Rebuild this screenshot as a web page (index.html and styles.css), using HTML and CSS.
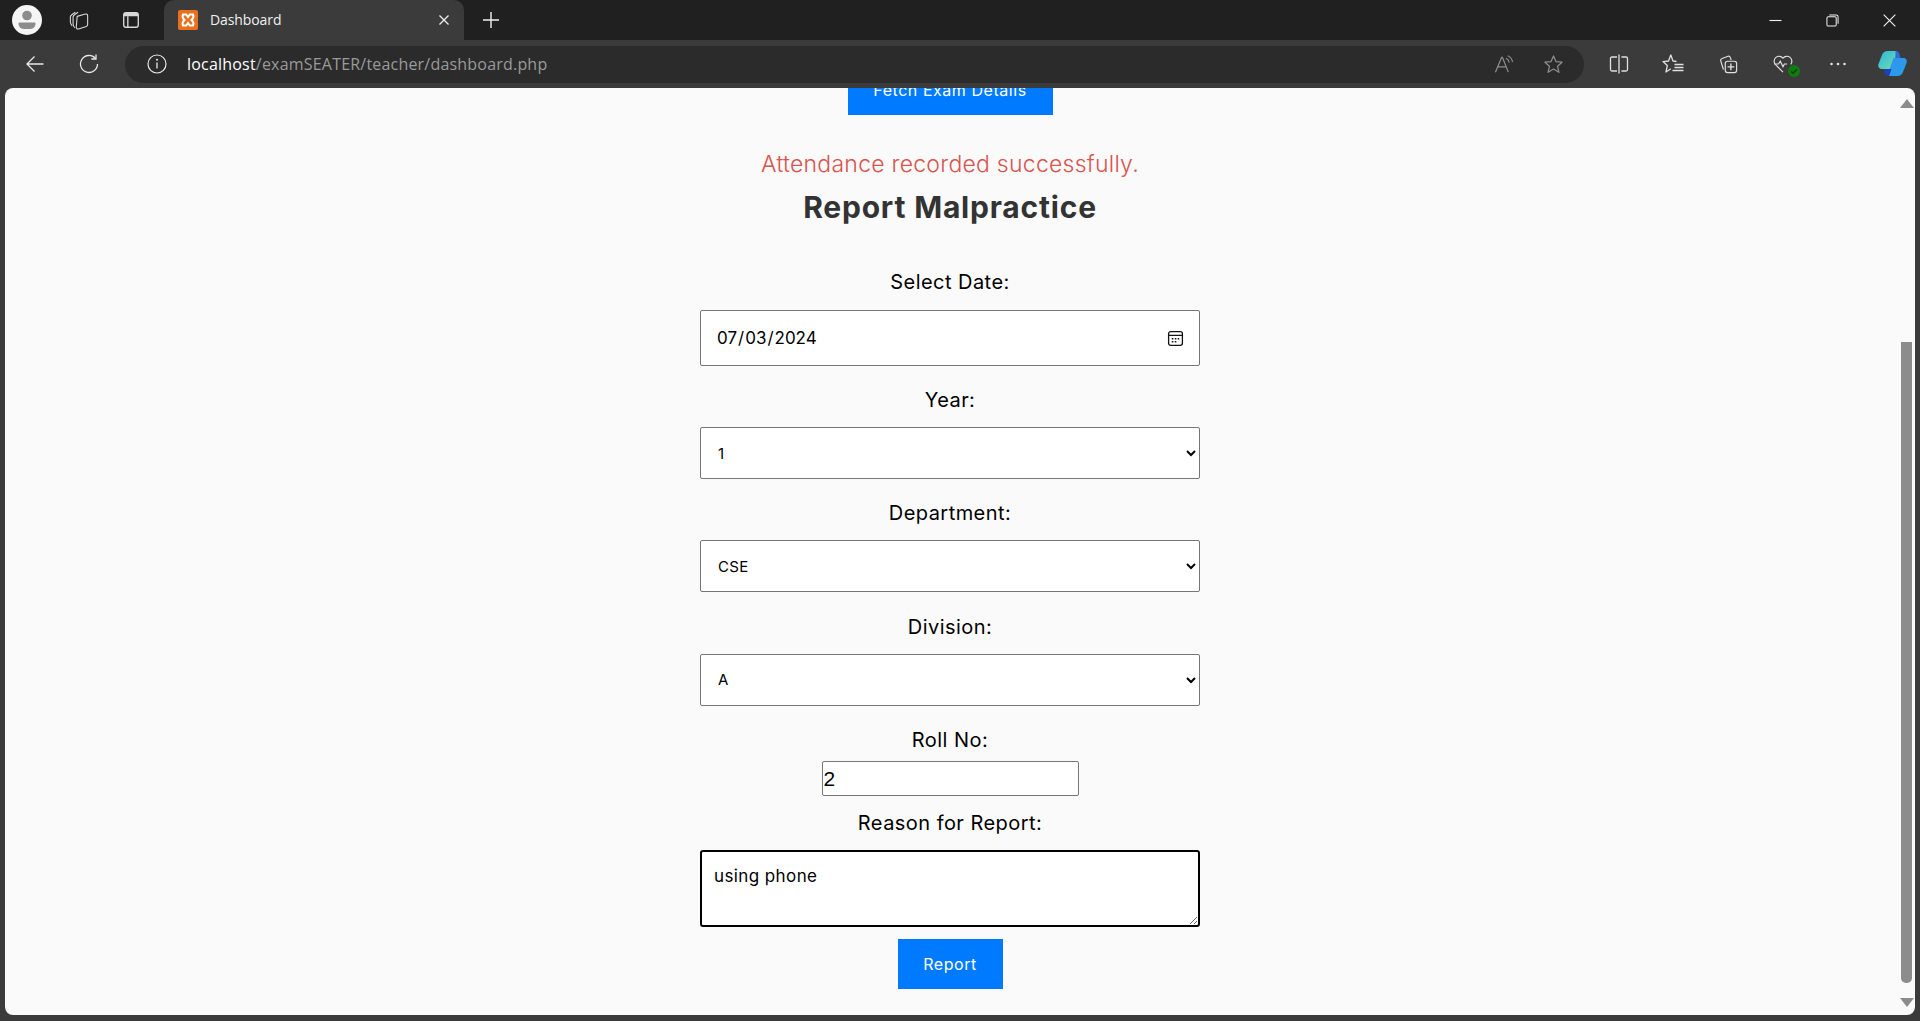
FILE: index.html
```html
<!DOCTYPE html>
<html lang="en">
<head>
  <meta charset="UTF-8" />
  <meta name="viewport" content="width=device-width, initial-scale=1.0"/>
  <title>Dashboard</title>
  <link rel="stylesheet" href="styles.css">
</head>
<body>
  <div class="tabbar">
    <div class="slot">
      <svg class="avatar" viewBox="0 0 30 30"><circle cx="15" cy="15" r="15" fill="#f5f5f5"/><circle cx="15" cy="10.5" r="4.800" fill="#8c8c8c"/><path d="M7.500 17.500h15a1 1 0 0 1 1 1v1a6 6 0 0 1-6 4.500h-5a6 6 0 0 1-6-4.500v-1a1 1 0 0 1 1-1z" fill="#8c8c8c"/></svg>
    </div>
    <div class="slot">
      <svg class="ico" viewBox="0 0 22 22"><g fill="none" stroke="#d8d8d8" stroke-width="1.200" stroke-linejoin="round"><path d="M3.500 17.500C2 16 1.500 14.500 1.500 13V7.500c0-1 .5-1.500 1.500-2.300L7 2.500"/><path d="M6.500 19.500C5 18.500 4.500 17 4.500 15V7.500c0-1 .5-1.500 1.500-2.300L10 2.500"/><path d="M9 7.500l9-2.500c1.500-.4 2.500.4 2.500 1.800v9.700c0 1-.6 1.800-1.500 2.100l-8.500 2.700c-1.500.4-2.500-.4-2.500-1.800z" transform="translate(0 -.5)"/></g></svg>
    </div>
    <div class="slot">
      <svg class="ico" viewBox="0 0 22 22"><rect x="3" y="3" width="16" height="16" rx="2.500" fill="none" stroke="#d8d8d8" stroke-width="1.500"/><path d="M3 5.500a2.500 2.500 0 0 1 2.500-2.500h11a2.500 2.500 0 0 1 2.500 2.500V7H3z" fill="#d8d8d8"/><path d="M7.500 7v12" stroke="#d8d8d8" stroke-width="1.500"/></svg>
    </div>
    <div class="tab">
      <svg class="favicon" viewBox="0 0 20 20"><rect width="20" height="20" rx="2" fill="#e8701f"/><path d="M5 4.500h3.200L10 7l1.800-2.500H15c1 2 .8 3.500-1.500 5.500 2.300 2 2.500 3.500 1.500 5.500h-3.200L10 13l-1.800 2.500H5c-1-2-.8-3.500 1.500-5.500C4.200 8 4 6.500 5 4.500z" fill="none" stroke="#fff" stroke-width="2"/></svg>
      <span class="tab-title">Dashboard</span>
      <svg class="tab-close" viewBox="0 0 12 12"><path d="M1.500 1.500l9 9M10.500 1.500l-9 9" stroke="#f0f0f0" stroke-width="1.300"/></svg>
    </div>
    <div class="slot newtab">
      <svg class="ico" viewBox="0 0 20 20"><path d="M10 2v16M2 10h16" stroke="#f0f0f0" stroke-width="1.400"/></svg>
    </div>
    <div class="winbtns">
      <div class="winbtn"><svg class="winico" viewBox="0 0 14 14"><path d="M.5 7h13" stroke="#f0f0f0" stroke-width="1.200"/></svg></div>
      <div class="winbtn"><svg class="winico" viewBox="0 0 14 14"><g fill="none" stroke="#f0f0f0" stroke-width="1.100"><rect x="1" y="3" width="10" height="10" rx="1.500"/><path d="M3.500 1h7.500a2 2 0 0 1 2 2v7.500"/></g></svg></div>
      <div class="winbtn"><svg class="winico" viewBox="0 0 14 14"><path d="M.7.700l12.600 12.600M13.300.700L.7 13.300" stroke="#f0f0f0" stroke-width="1.200"/></svg></div>
    </div>
  </div>

  <div class="toolbar">
    <div class="navbtn">
      <svg class="ico" viewBox="0 0 20 20"><path d="M18.500 10H2M9.500 2.500L2 10l7.500 7.500" fill="none" stroke="#e8e8e8" stroke-width="1.300"/></svg>
    </div>
    <div class="navbtn">
      <svg class="ico" viewBox="0 0 20 20"><path d="M16.500 4.500A8.500 8.500 0 1 0 18.500 10" fill="none" stroke="#e8e8e8" stroke-width="1.300"/><path d="M17 .5v4.500h-4.700" fill="none" stroke="#e8e8e8" stroke-width="1.300"/></svg>
    </div>
    <div class="address">
      <svg class="info" viewBox="0 0 20 20"><circle cx="10" cy="10" r="9" fill="none" stroke="#e8e8e8" stroke-width="1.200"/><path d="M10 8.500v6" stroke="#e8e8e8" stroke-width="1.300"/><circle cx="10" cy="5.800" r="1" fill="#e8e8e8"/></svg>
      <span class="url"><span class="url-host">localhost</span>/examSEATER/teacher/dashboard.php</span>
      <svg class="addr-ico read" viewBox="0 0 22 20"><path d="M1.500 18L8 2.500h.8L15 18M4 12.500h9" fill="none" stroke="#8e8e8e" stroke-width="1.300"/><path d="M12.500 3.500a6 6 0 0 1 3.500 4.500" fill="none" stroke="#8e8e8e" stroke-width="1.200"/><path d="M14.500 .8a9 9 0 0 1 5 6.500" fill="none" stroke="#8e8e8e" stroke-width="1.200"/></svg>
      <svg class="addr-ico" viewBox="0 0 22 22"><path d="M11 2l2.700 6 6.300.6-4.800 4.200 1.500 6.400L11 15.800 5.300 19.200l1.500-6.400L2 8.600 8.300 8z" fill="none" stroke="#8e8e8e" stroke-width="1.300" stroke-linejoin="round"/></svg>
    </div>
    <div class="tools">
      <div class="toolbtn"><svg class="ico" viewBox="0 0 20 20"><path d="M8 3H3a1.500 1.500 0 0 0-1.500 1.500v11A1.500 1.500 0 0 0 3 17h5M12.500 3H17a1.500 1.500 0 0 1 1.500 1.500v11A1.500 1.500 0 0 1 17 17h-4.500M10 .5v19" fill="none" stroke="#e0e0e0" stroke-width="1.300"/></svg></div>
      <div class="toolbtn"><svg class="ico fav-ico" viewBox="0 0 22 22"><path d="M14.500 8.500L11 8 8.800 2 6.500 8l-5.500.6 4.300 4-1.300 6.400 4.800-3.200" fill="none" stroke="#e0e0e0" stroke-width="1.300" stroke-linejoin="round"/><path d="M12.500 11.500h9M12.500 14.500h9M10.500 17.500h11" stroke="#e0e0e0" stroke-width="1.300"/></svg></div>
      <div class="toolbtn"><svg class="ico" viewBox="0 0 22 22"><path d="M6 17L3 7.500A2 2 0 0 1 4.500 5L11 2.500a2 2 0 0 1 2.500 1.200l1 3" fill="none" stroke="#e0e0e0" stroke-width="1.300"/><rect x="8" y="8" width="12.500" height="12.500" rx="2.500" fill="none" stroke="#e0e0e0" stroke-width="1.300"/><path d="M14.200 10.500v7.500M10.500 14.200h7.500" stroke="#e0e0e0" stroke-width="1.500"/></svg></div>
      <div class="toolbtn health">
        <svg class="ico" viewBox="0 0 22 22"><path d="M11 20L2.500 11.500A5.500 5.500 0 0 1 11 4.500a5.500 5.500 0 0 1 8.500 7" fill="none" stroke="#e0e0e0" stroke-width="1.300"/><path d="M1.500 11h4.500l2-3 3 6 1.500-3h3" fill="none" stroke="#e0e0e0" stroke-width="1.300"/></svg>
        <svg class="badge" viewBox="0 0 12 12"><circle cx="6" cy="6" r="6" fill="#107c10"/><path d="M3.200 6.200l2 2 3.600-4" fill="none" stroke="#0b3f0b" stroke-width="1.300"/></svg>
      </div>
      <div class="toolbtn"><svg class="ico" viewBox="0 0 20 20"><circle cx="3.500" cy="10" r="1.300" fill="#e0e0e0"/><circle cx="10" cy="10" r="1.300" fill="#e0e0e0"/><circle cx="16.500" cy="10" r="1.300" fill="#e0e0e0"/></svg></div>
      <div class="toolbtn">
        <svg class="copilot" viewBox="0 0 30 28">
          <defs>
            <linearGradient id="cpa" x1="0" y1="0" x2="1" y2="1"><stop offset="0" stop-color="#2fb4e8"/><stop offset="1" stop-color="#6fe0a0"/></linearGradient>
            <linearGradient id="cpb" x1="0" y1="0" x2="1" y2="1"><stop offset="0" stop-color="#3a8df0"/><stop offset="1" stop-color="#1fa4e8"/></linearGradient>
          </defs>
          <path d="M10 1h8c1.500 0 2 1 1.500 2.500L14 19H5c-3 0-5-2-4-5l3.500-9C5.500 2.500 7.500 1 10 1z" fill="url(#cpa)"/>
          <path d="M18 1c2 0 3.500 1 4 3l1 4h-5z" fill="#2a6fd8"/>
          <path d="M16 8h9.500c3 0 4.500 2 3.500 5l-3.500 9c-1 2.500-3 4-5.500 4h-8c-1.500 0-2-1-1.500-2.500z" fill="url(#cpb)"/>
          <path d="M6 19h8l-2 6c-.3 1-1 1-1.500 1C8 26 7 23 6 19z" fill="#1e3fb8"/>
        </svg>
      </div>
    </div>
  </div>

  <div class="viewport">
    <main class="page">
      <button type="button" class="btn fetch-btn">Fetch Exam Details</button>
      <p class="message">Attendance recorded successfully.</p>
      <h2 class="title">Report Malpractice</h2>
      <form class="report-form">
        <label class="field-label" for="date">Select Date:</label>
        <input class="field field-date" type="date" id="date" value="2024-07-03">
        <label class="field-label" for="year">Year:</label>
        <select class="field field-select" id="year">
          <option>1</option>
          <option>2</option>
          <option>3</option>
        </select>
        <label class="field-label" for="dept">Department:</label>
        <select class="field field-select" id="dept">
          <option>CSE</option>
          <option>ECE</option>
        </select>
        <label class="field-label" for="div">Division:</label>
        <select class="field field-select" id="div">
          <option>A</option>
          <option>B</option>
        </select>
        <label class="field-label" for="roll">Roll No:</label>
        <input class="roll-input" type="text" id="roll" value="2">
        <label class="field-label" for="reason">Reason for Report:</label>
        <textarea class="field reason-input" id="reason">using phone</textarea>
        <button type="button" class="btn report-btn">Report</button>
      </form>
    </main>
    <div class="scrollbar">
      <span class="arrow-up"></span>
      <div class="track"><div class="thumb"></div></div>
      <span class="arrow-down"></span>
    </div>
  </div>
</body>
</html>
```
FILE: styles.css
```css
* {
  box-sizing: border-box;
}
html, body {
  height: 100%;
}
body {
  margin: 0;
  height: 1021px;
  overflow: hidden;
  display: flex;
  flex-direction: column;
  background: #3b3b3b;
  font-family: "Inter", "Liberation Sans", sans-serif;
}

/* browser chrome */
.tabbar {
  height: 40px;
  flex: none;
  display: flex;
  align-items: flex-end;
  padding-left: 1px;
  background: #202020;
}
.slot {
  width: 52px;
  height: 40px;
  flex: none;
  display: flex;
  align-items: center;
  justify-content: center;
}
.avatar {
  width: 30px;
  height: 30px;
}
.ico {
  width: 20px;
  height: 20px;
}
.fav-ico {
  width: 22px;
  height: 22px;
}
.tab {
  width: 300px;
  height: 40px;
  margin-left: 7px;
  padding: 0 14px 1px;
  display: flex;
  align-items: center;
  flex: none;
  background: #3b3b3b;
  border-radius: 10px 10px 0 0;
}
.favicon {
  width: 20px;
  height: 20px;
}
.tab-title {
  margin-left: 12px;
  margin-bottom: 1px;
  flex: 1;
  font: 14px "Open Sans", sans-serif;
  letter-spacing: -0.1px;
  color: #f0f0f0;
}
.tab-close {
  width: 12px;
  height: 12px;
}
.newtab {
  width: 54px;
}
.winbtns {
  margin-left: auto;
  padding-right: 2px;
  display: flex;
}
.winbtn {
  width: 57px;
  height: 40px;
  display: flex;
  align-items: center;
  justify-content: center;
}
.winico {
  width: 13px;
  height: 13px;
}

.toolbar {
  height: 48px;
  flex: none;
  display: flex;
  align-items: center;
  padding-left: 8px;
  background: #3b3b3b;
}
.navbtn {
  width: 54px;
  height: 40px;
  flex: none;
  display: flex;
  align-items: center;
  justify-content: center;
}
.address {
  flex: 1;
  height: 37px;
  margin-left: 9px;
  margin-right: 7px;
  padding: 0 20px 0 22px;
  display: flex;
  align-items: center;
  background: #2b2b2b;
  border-radius: 19px;
}
.info {
  width: 20px;
  height: 20px;
  flex: none;
}
.url {
  margin-left: 20px;
  flex: 1;
  font: 16px "Open Sans", sans-serif;
  letter-spacing: 0.2px;
  color: #9a9a9a;
}
.url-host {
  color: #fff;
}
.addr-ico {
  width: 21px;
  height: 21px;
  margin-left: 28px;
  flex: none;
}
.tools {
  display: flex;
  flex: none;
}
.toolbtn {
  width: 54.8px;
  height: 40px;
  position: relative;
  display: flex;
  align-items: center;
  justify-content: center;
}
.badge {
  position: absolute;
  left: 32px;
  top: 21px;
  width: 12px;
  height: 12px;
}
.copilot {
  width: 31px;
  height: 28px;
}

/* page */
.viewport {
  height: 927px;
  margin: 0 5px 0 5px;
  flex: none;
  display: flex;
  overflow: hidden;
  background: #fafafa;
  border-radius: 8px;
}
.page {
  flex: 1;
  display: flex;
  flex-direction: column;
  align-items: center;
  margin-top: -23px;
  padding-right: 3px;
}
.btn {
  border: none;
  color: #fff;
  background: #007bff;
  font-family: inherit;
  font-size: 16px;
  letter-spacing: 0.55px;
}
.fetch-btn {
  width: 205px;
  height: 50px;
  flex: none;
}
.message {
  margin: 33px 0 0;
  font-size: 23px;
  font-weight: 300;
  line-height: 33px;
  letter-spacing: 0.25px;
  color: #d9534f;
}
.title {
  margin: 4px 0 0;
  font-size: 30px;
  font-weight: 700;
  line-height: 44px;
  letter-spacing: 0.8px;
  color: #333;
}
.report-form {
  width: 500px;
  margin-top: 40px;
  display: flex;
  flex-direction: column;
  align-items: center;
}
.field-label {
  height: 27px;
  font-size: 20px;
  line-height: 27px;
  letter-spacing: 0.45px;
  color: #000;
}
.field {
  width: 100%;
  background: #fff;
  border: 1px solid #767676;
  border-radius: 2px;
  font-family: inherit;
  font-size: 16px;
  color: #000;
}
.field-date {
  height: 56px;
  margin-top: 14px;
  margin-bottom: 21px;
  padding: 0 15px;
  font-size: 17px;
}
.field-date::-webkit-calendar-picker-indicator {
  width: 17px;
  height: 17px;
  padding: 0;
  margin-right: 0;
  background: url("data:image/svg+xml,%3Csvg xmlns='http://www.w3.org/2000/svg' viewBox='0 0 16 16'%3E%3Crect x='1.500' y='1.500' width='13' height='13' rx='2' fill='none' stroke='%23111' stroke-width='1.200'/%3E%3Cpath d='M1.500 5h13' stroke='%23111' stroke-width='1.200'/%3E%3Cpath d='M4.500 7.500h1.500v1.500H4.500zM7.300 7.500h1.500v1.500H7.300zM10 7.500h1.500v1.500H10zM4.500 10.300h1.500v1.500H4.500zM7.300 10.300h1.500v1.500H7.300z' fill='%23111'/%3E%3C/svg%3E") no-repeat center;
}
.field-select {
  height: 52px;
  margin-top: 13px;
  margin-bottom: 21.4px;
  padding: 0 13px;
  font-size: 15px;
  letter-spacing: 0.3px;
}
.roll-input {
  width: 257px;
  height: 35px;
  margin-top: 7px;
  margin-bottom: 14px;
  padding: 1px;
  background: #fff;
  border: 1px solid #767676;
  border-radius: 2px;
  font: 21px "Liberation Sans", sans-serif;
  color: #000;
}
.reason-input {
  height: 77px;
  margin-top: 13px;
  padding: 14px 12px;
  border: 2px solid #000;
  border-radius: 3px;
  font-size: 17px;
  letter-spacing: 0.4px;
  resize: vertical;
}
.report-btn {
  width: 105px;
  height: 50px;
  margin-top: 12px;
  flex: none;
}

/* scrollbar */
.scrollbar {
  width: 17px;
  flex: none;
  display: flex;
  flex-direction: column;
  align-items: center;
  padding: 11px 0 8px;
}
.arrow-up, .arrow-down {
  width: 0;
  height: 0;
  flex: none;
  border-left: 7px solid transparent;
  border-right: 7px solid transparent;
}
.arrow-up {
  border-bottom: 9px solid #8c8c8c;
}
.arrow-down {
  border-top: 9px solid #8c8c8c;
}
.track {
  flex: 1;
  width: 100%;
  padding: 234px 3px 15px;
}
.thumb {
  height: 100%;
  background: #8c8c8c;
  border-radius: 0 0 5px 5px;
}
```
